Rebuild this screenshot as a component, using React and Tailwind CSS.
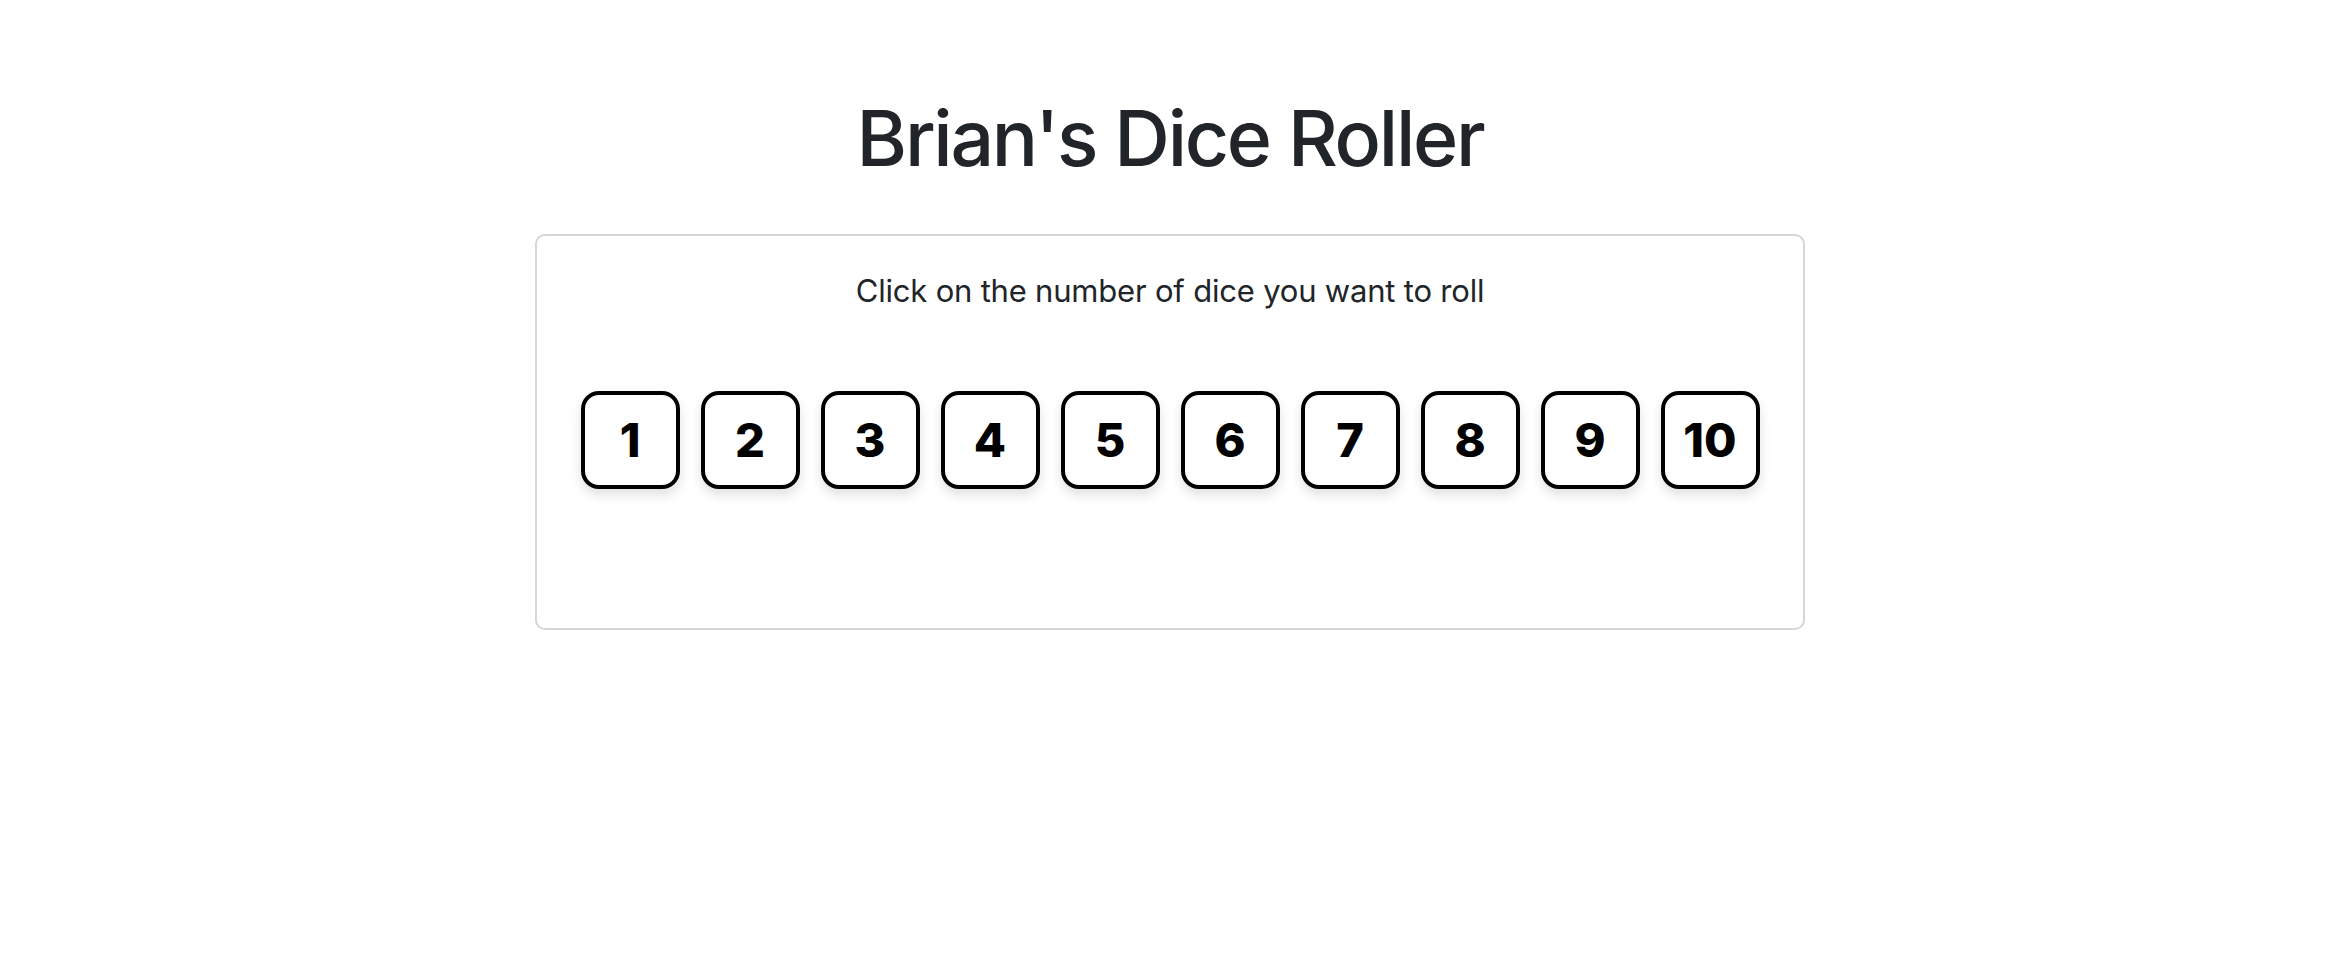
export default function App() {
  const dice = [1, 2, 3, 4, 5, 6, 7, 8, 9, 10];

  return (
    <div className="min-h-screen bg-white pt-[90px] font-['Inter','Liberation_Sans',sans-serif] text-[#212529]">
      <div className="ml-[535px] w-[1270px]">
        <h1 className="text-center text-[77px] font-medium leading-[96px] tracking-[-2.3px]">
          Brian's Dice Roller
        </h1>
        <div className="mt-[48px] h-[396px] rounded-[10px] border-2 border-[#d6d6d6] px-[43px] pt-[32px]">
          <p className="text-center text-[31px] leading-[46px] tracking-[-0.2px]">
            Click on the number of dice you want to roll
          </p>
          <div className="mt-[77px] flex justify-center gap-[21px]">
            {dice.map((n) => (
              <button
                key={n}
                className="flex h-[98px] w-[99px] items-center justify-center rounded-[18px] border-4 border-black bg-white text-[47px] font-extrabold text-black shadow-[0_6px_12px_rgba(0,0,0,0.12)]"
              >
                {n}
              </button>
            ))}
          </div>
        </div>
      </div>
    </div>
  );
}
